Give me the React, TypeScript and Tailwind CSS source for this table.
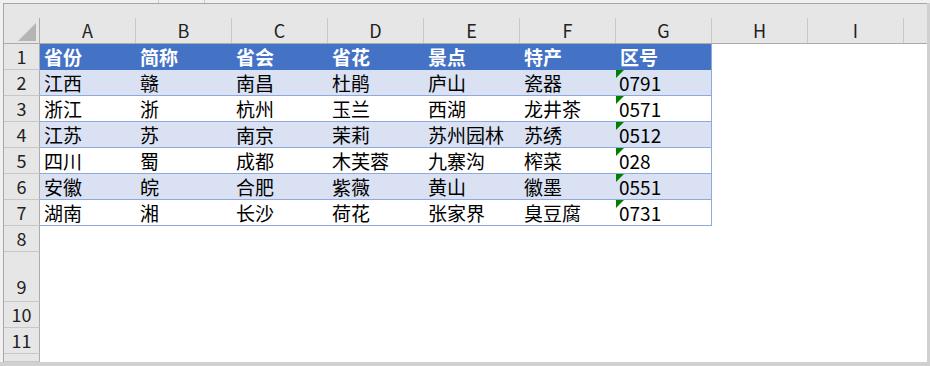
import React from 'react';

const COLS = ['A', 'B', 'C', 'D', 'E', 'F', 'G', 'H', 'I'];

const DATA: string[][] = [
  ['江西', '赣', '南昌', '杜鹃', '庐山', '瓷器', '0791'],
  ['浙江', '浙', '杭州', '玉兰', '西湖', '龙井茶', '0571'],
  ['江苏', '苏', '南京', '茉莉', '苏州园林', '苏绣', '0512'],
  ['四川', '蜀', '成都', '木芙蓉', '九寨沟', '榨菜', '028'],
  ['安徽', '皖', '合肥', '紫薇', '黄山', '徽墨', '0551'],
  ['湖南', '湘', '长沙', '荷花', '张家界', '臭豆腐', '0731'],
];

const HEAD = ['省份', '简称', '省会', '省花', '景点', '特产', '区号'];

const font = "font-['Noto_Sans_CJK_SC','Noto_Sans',sans-serif]";

const RowHead = ({ n, tall, cut }: { n: number; tall?: boolean; cut?: boolean }) => (
  <div
    className={`w-[36px] shrink-0 flex justify-center border-r border-b border-r-[#ababab] border-b-[#c8c8c8] bg-[#e6e6e6] text-[18px] text-[#222] overflow-hidden ${tall ? 'items-end pb-[1px]' : cut ? 'items-start' : 'items-center'}`}
  >
    <div className={cut ? 'h-[26px] shrink-0 leading-[26px]' : ''}>{n}</div>
  </div>
);

const GreenFlag = () => (
  <svg width="8" height="8" className="absolute left-0 top-0" viewBox="0 0 8 8">
    <polygon points="0,0 8,0 0,8" fill="#008000" />
  </svg>
);

export default function App() {
  return (
    <div className={`w-[930px] h-[366px] bg-[#f0f0f0] flex flex-col overflow-hidden ${font}`}>
      <div className="h-[3px] flex shrink-0">
        <div className="w-[158px]" />
        <div className="w-px bg-[#c8c8c8]" />
        <div className="w-[45px]" />
        <div className="w-px bg-[#c8c8c8]" />
      </div>
      <div className="flex flex-1 min-h-0">
        <div className="w-[3px] shrink-0" />
        <div className="flex-1 flex flex-col border-l border-t border-[#a6a6a6] bg-white min-w-0">
          <div className="h-[14px] shrink-0 bg-[#e6e6e6]" />
          <div className="h-[26px] shrink-0 flex bg-[#e6e6e6] border-b border-[#ababab]">
            <div className="w-[36px] shrink-0 border-r border-[#ababab] relative">
              <svg width="36" height="25" className="absolute left-0 top-0">
                <polygon points="14,23 32,23 32,5" fill="#b4b4b4" />
              </svg>
            </div>
            {COLS.map((c) => (
              <div
                key={c}
                className="w-[96px] shrink-0 border-r border-[#c8c8c8] flex items-center justify-center text-[18px] text-[#222]"
              >
                {c}
              </div>
            ))}
            <div className="flex-1" />
          </div>

          <div className="h-[26px] shrink-0 flex">
            <RowHead n={1} />
            <div className="w-[672px] shrink-0 flex bg-[#4472c4] border-r border-[#8ea9db]">
              {HEAD.map((h, i) => (
                <div
                  key={i}
                  className={`${i === 6 ? 'w-[95px]' : 'w-[96px]'} shrink-0 pl-[4px] text-[19px] leading-[26px] font-bold text-white`}
                >
                  {h}
                </div>
              ))}
            </div>
            <div className="flex-1 bg-white" />
          </div>

          {DATA.map((row, r) => (
            <div key={r} className="h-[26px] shrink-0 flex">
              <RowHead n={r + 2} />
              <div
                className={`w-[672px] shrink-0 flex border-r border-b border-[#8ea9db] ${r % 2 === 0 ? 'bg-[#d9e1f2]' : 'bg-white'}`}
              >
                {row.map((v, i) => (
                  <div
                    key={i}
                    className={`${i === 6 ? 'w-[95px] pl-[3px]' : 'w-[96px] pl-[4px]'} relative shrink-0 text-[19px] leading-[26px] text-black`}
                  >
                    {i === 6 && <GreenFlag />}
                    {v}
                  </div>
                ))}
              </div>
              <div className="flex-1 bg-white" />
            </div>
          ))}

          {[8, 9, 10, 11, 12].map((n) => (
            <div
              key={n}
              className={`${n === 9 ? 'h-[50px]' : n === 12 ? 'h-[8px]' : 'h-[26px]'} shrink-0 flex overflow-hidden`}
            >
              <RowHead n={n} tall={n === 9} cut={n === 12} />
              <div className="flex-1 bg-white" />
            </div>
          ))}
        </div>
        <div className="w-[3px] shrink-0 bg-[#d0d0d0]" />
      </div>
      <div className="h-[4px] shrink-0 bg-[#d0d0d0]" />
    </div>
  );
}
